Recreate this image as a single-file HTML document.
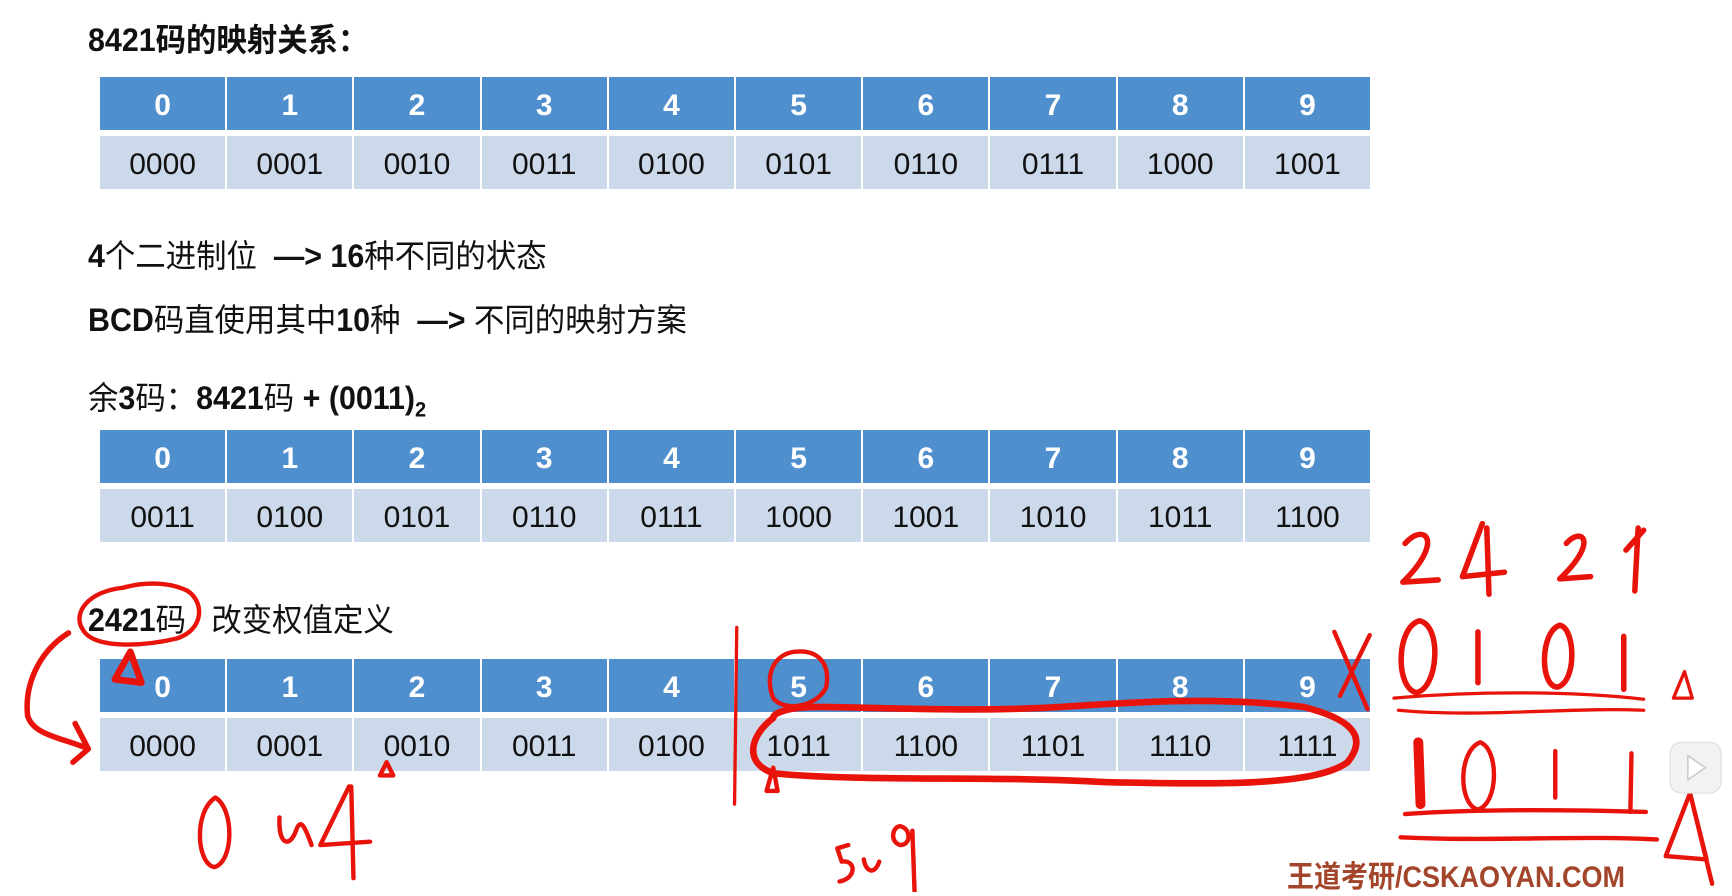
<!DOCTYPE html>
<html><head><meta charset="utf-8"><style>
body{margin:0;width:1732px;height:892px;background:#fff;position:relative;overflow:hidden;font-family:"Liberation Sans","Noto Sans CJK SC",sans-serif;}
.t{position:absolute;left:88px;font-size:32px;color:#111;white-space:nowrap;line-height:1;font-weight:bold;transform:scaleX(0.95);transform-origin:left}
.t span{font-weight:normal}
.tb{position:absolute;left:100px;width:1270px}
.r{display:flex;gap:2px}
.r div{flex:1;display:flex;align-items:center;justify-content:center}
.h div{background:#4f8fce;color:#fff;font-weight:bold;font-size:30px;padding-top:4px;box-sizing:border-box}
.d div{background:#ccd9ea;color:#111;font-size:30px;padding-top:4px;box-sizing:border-box}
svg{position:absolute;left:0;top:0}
</style></head><body>
<div class="t" style="top:24px">8421码的映射关系：</div>
<div class="tb" style="top:77px">
<div class="r h" style="height:53px"><div>0</div><div>1</div><div>2</div><div>3</div><div>4</div><div>5</div><div>6</div><div>7</div><div>8</div><div>9</div></div>
<div class="r d" style="height:53px;margin-top:6px"><div>0000</div><div>0001</div><div>0010</div><div>0011</div><div>0100</div><div>0101</div><div>0110</div><div>0111</div><div>1000</div><div>1001</div></div>
</div>
<div class="t" style="top:240px">4<span>个二进制位</span> &nbsp;—&gt; 16<span>种不同的状态</span></div>
<div class="t" style="top:304px">BCD<span>码直使用其中</span>10<span>种</span> &nbsp;—&gt; <span>不同的映射方案</span></div>
<div class="t" style="top:382px"><span>余</span>3<span>码：</span>8421<span>码</span> + (0011)<sub style="font-size:21px">2</sub></div>
<div class="tb" style="top:430px">
<div class="r h" style="height:53px"><div>0</div><div>1</div><div>2</div><div>3</div><div>4</div><div>5</div><div>6</div><div>7</div><div>8</div><div>9</div></div>
<div class="r d" style="height:53px;margin-top:6px"><div>0011</div><div>0100</div><div>0101</div><div>0110</div><div>0111</div><div>1000</div><div>1001</div><div>1010</div><div>1011</div><div>1100</div></div>
</div>
<div class="t" style="top:604px">2421<span>码 &nbsp;&nbsp;改变权值定义</span></div>
<div class="tb" style="top:659px">
<div class="r h" style="height:53px"><div>0</div><div>1</div><div>2</div><div>3</div><div>4</div><div>5</div><div>6</div><div>7</div><div>8</div><div>9</div></div>
<div class="r d" style="height:53px;margin-top:6px"><div>0000</div><div>0001</div><div>0010</div><div>0011</div><div>0100</div><div>1011</div><div>1100</div><div>1101</div><div>1110</div><div>1111</div></div>
</div>
<div style="position:absolute;left:1287px;top:852px;font-size:30px;color:#a3452b;transform:scaleX(0.9);transform-origin:left;font-weight:bold">王道考研/CSKAOYAN.COM</div>
<svg width="1732" height="892" viewBox="0 0 1568 807.5" fill="none" stroke="#e8140c" stroke-width="4" stroke-linecap="round" stroke-linejoin="round">
<path d="M112 532 C80 535 65 555 75 570 C85 588 130 585 160 578 C185 570 185 545 170 535 C150 525 125 528 112 532"/>
<path d="M118 590 L104 615 L128 618 Z" stroke-width="6"/>
<path d="M62 573 C35 590 22 620 25 648 C30 665 55 668 75 676 M68 655 L80 678 L66 690" stroke-width="5"/>
<path d="M667 568 L665 728" stroke-width="3"/>
<path d="M700 695 L694 716 L704 716 Z"/>
<path d="M720 590 C700 592 692 612 700 632 C710 645 740 640 748 622 C752 600 740 588 720 590"/>
<path d="M700 650 C680 665 672 690 700 700 C780 708 900 702 1000 708 C1100 710 1190 712 1220 690 C1240 665 1220 650 1180 640 C1100 630 1020 636 960 640 C880 645 780 640 740 640 C715 640 700 645 700 650" stroke-width="6"/>
<path d="M350 690 L344 702 L356 702 Z"/>
<path d="M195 722 C175 735 178 782 194 785 C212 780 212 732 195 722" stroke-width="4"/>
<path d="M253 740 C252 765 262 768 268 752 C272 740 276 748 282 765" stroke-width="4"/>
<path d="M316 712 L290 765 L335 762 M318 712 L320 795" stroke-width="4"/>
<path d="M768 765 L758 768 L762 780 C775 778 776 795 760 798 M782 778 C784 790 792 792 796 780 M815 748 C808 748 805 762 815 765 C825 765 825 750 815 748 M826 752 L828 808" stroke-width="4"/>
<path d="M1208 572 L1238 642 M1240 575 L1213 630" stroke-width="4"/>
<path d="M1272 492 C1290 472 1308 490 1270 527 L1302 525 M1342 474 L1324 522 L1362 518 M1346 478 L1348 538 M1418 492 C1432 476 1448 490 1412 524 L1440 522 M1483 478 L1480 535 M1472 498 L1488 480" stroke-width="5"/>
<path d="M1285 562 C1264 568 1263 622 1282 627 C1302 624 1306 566 1285 562 M1338 572 L1338 618 M1412 566 C1394 572 1394 622 1410 622 C1428 617 1426 568 1412 566 M1470 576 L1470 624" stroke-width="5"/>
<path d="M1262 632 C1330 626 1420 625 1488 633 M1266 643 C1340 650 1420 640 1488 643" stroke-width="3"/>
<path d="M1525 608 L1515 632 L1532 632 Z" stroke-width="3"/>
<path d="M1284 672 L1286 728" stroke-width="9"/>
<path d="M1340 672 C1320 680 1320 728 1338 733 C1357 727 1357 678 1340 672 M1408 680 L1408 722 M1477 682 L1476 735" stroke-width="4"/>
<path d="M1272 737 C1340 732 1420 733 1490 735 M1268 758 C1350 762 1430 756 1500 760" stroke-width="4"/>
<path d="M1530 718 L1508 775 L1545 778 Z M1530 718 L1550 800" stroke-width="4"/>
<rect x="1512" y="672" width="46" height="46" rx="10" fill="#f2f2f2" stroke="#ddd" stroke-width="1"/>
<path d="M1528 684 L1528 706 L1544 695 Z" fill="#fff" stroke="#ccc" stroke-width="1.5"/>
</svg>
</body></html>
